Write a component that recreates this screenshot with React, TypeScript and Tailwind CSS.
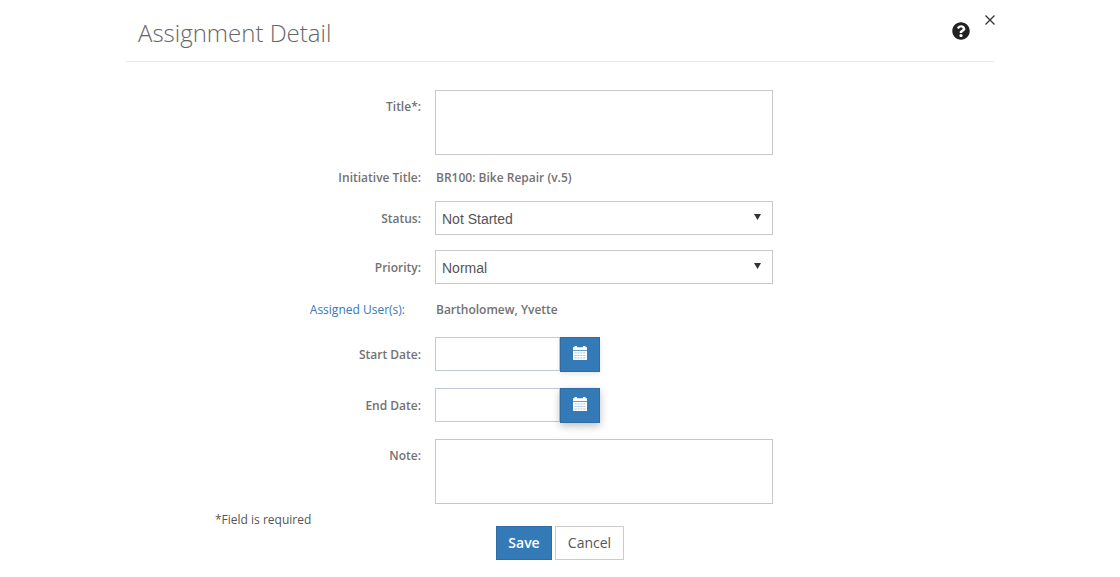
import React from "react";
import { FaQuestionCircle } from "react-icons/fa";

const labelCls = "w-[295px] shrink-0 text-right text-[12px] leading-5 text-[#727272]";
const strongCls = "font-semibold";

function Calendar() {
  const rows = [6.5, 9, 11.5];
  const cols = [1.5, 4.4, 7.3, 10.2];
  return (
    <svg width="14" height="14" viewBox="0 0 14 14" aria-hidden="true">
      <path fill="#fff" d="M0 1.3h1.5V0h2.5v1.3h6V0h2.5v1.3H14V4.3H0z" />
      <path fill="#fff" d="M0 5h14v9H0z" />
      {rows.map((y) =>
        cols.map((x) => <rect key={`${x}-${y}`} x={x} y={y} width="2.2" height="0.9" fill="#9fc3e3" />)
      )}
    </svg>
  );
}

function SelectRow({ label, value, mt }: { label: string; value: string; mt: string }) {
  return (
    <div className={`flex gap-[14px] ${mt}`}>
      <label className={`${labelCls} ${strongCls} pt-[8px]`}>{label}</label>
      <div className="relative w-[338px] h-[34px]">
        <select
          defaultValue={value}
          className="w-full h-full appearance-none bg-white border border-[#c8c8c8] pl-[6px] pr-6 pt-[2px] text-[14px] text-[#555555] outline-none rounded-none [font-family:'Liberation_Sans',Arial,sans-serif]"
        >
          <option>{value}</option>
        </select>
        <svg className="absolute left-[319px] top-[13px] pointer-events-none" width="7" height="6" viewBox="0 0 7 6" aria-hidden="true">
          <path fill="#333333" d="M0 0h7L3.5 6z" />
        </svg>
      </div>
    </div>
  );
}

function DateRow({ label, shadow, mt }: { label: string; shadow: string; mt: string }) {
  return (
    <div className={`flex gap-[14px] ${mt}`}>
      <label className={`${labelCls} ${strongCls} pt-[8px]`}>{label}</label>
      <div className="flex items-start">
        <input className="w-[125px] h-[34px] border border-[#c2cad8] bg-white outline-none" />
        <button className={`w-[40px] h-[35px] flex items-center justify-center pb-[3px] bg-[#337ab7] border border-[#2e6da4] ${shadow}`}>
          <Calendar />
        </button>
      </div>
    </div>
  );
}

export default function App() {
  return (
    <div className="w-[1120px] h-[577px] overflow-hidden bg-white [font-family:'Open_Sans',sans-serif]">
      <div className="w-[868px] ml-[126px]">
        <div className="relative h-[62px] border-b border-[#e8e8e8] pl-3 pt-[16px]">
          <h1 className="text-[24px] leading-[34px] font-light text-[#666666]">Assignment Detail</h1>
          <FaQuestionCircle className="absolute left-[825.5px] top-[22px] text-[#222222]" size={18} />
          <svg className="absolute left-[858.5px] top-[14.5px]" width="10" height="10" viewBox="0 0 10 10" aria-hidden="true">
            <path stroke="#333333" strokeWidth="1.3" fill="none" d="M.5.5l9 9M9.5.5l-9 9" />
          </svg>
        </div>

        <div className="flex gap-[14px] mt-[28px]">
          <label className={`${labelCls} ${strongCls} pt-[7px]`}>Title*:</label>
          <textarea className="w-[338px] h-[65px] border border-[#c8c8c8] bg-white outline-none resize-none" />
        </div>

        <div className="flex gap-[14px] mt-[12px]">
          <div className={`${labelCls} ${strongCls} pt-px`}>Initiative Title:</div>
          <div className="pt-px pl-px text-[12px] leading-5 font-semibold text-[#727272]">BR100: Bike Repair (v.5)</div>
        </div>

        <SelectRow label="Status:" value="Not Started" mt="mt-[13px]" />
        <SelectRow label="Priority:" value="Normal" mt="mt-[15px]" />

        <div className="flex gap-[14px] mt-[16px]">
          <div className={`${labelCls} pr-4`}>
            <a className="text-[#337ab7]">Assigned User(s):</a>
          </div>
          <div className="pl-px text-[12px] leading-5 font-semibold text-[#727272]">Bartholomew, Yvette</div>
        </div>

        <DateRow label="Start Date:" shadow="shadow-[0_2px_5px_rgba(0,0,0,0.1)]" mt="mt-[17px]" />
        <DateRow label="End Date:" shadow="shadow-[0_3px_8px_rgba(0,0,0,0.25)]" mt="mt-[16px]" />

        <div className="flex gap-[14px] mt-[16px]">
          <label className={`${labelCls} ${strongCls} pt-[7px]`}>Note:</label>
          <textarea className="w-[338px] h-[65px] border border-[#c8c8c8] bg-white outline-none resize-none" />
        </div>

        <div className="flex items-start">
          <div className="ml-[89px] w-[281px] mt-[6px] text-[12px] leading-5 text-[#555555]">*Field is required</div>
          <div className="flex gap-[3px] mt-[22px]">
            <button className="w-[56px] h-[34px] pb-px bg-[#337ab7] border border-[#2e6da4] text-white text-[14px] font-semibold">Save</button>
            <button className="w-[69px] h-[34px] pb-px bg-white border border-[#cccccc] text-[#555555] text-[14px]">Cancel</button>
          </div>
        </div>
      </div>
    </div>
  );
}
